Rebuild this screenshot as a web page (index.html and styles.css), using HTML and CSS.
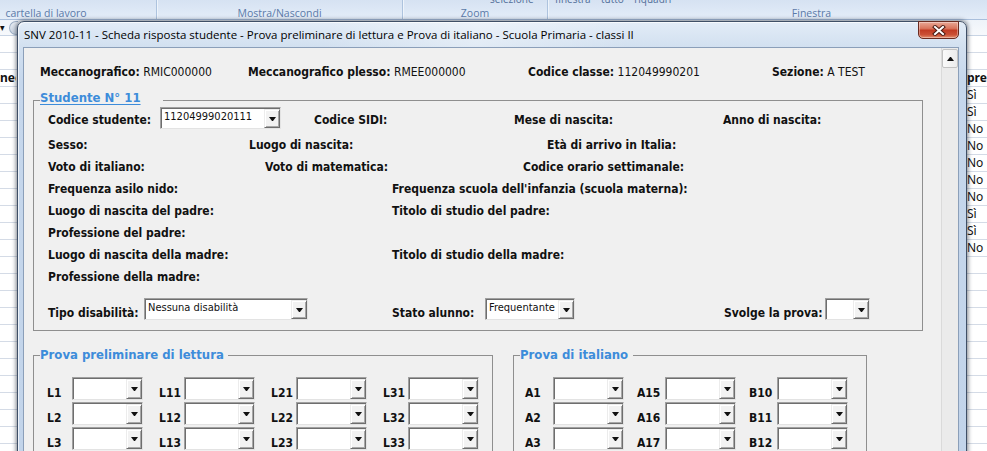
FILE: index.html
```html
<!DOCTYPE html>
<html lang="it">
<head>
<meta charset="utf-8">
<title>SNV 2010-11 - Scheda risposta studente</title>
<link rel="stylesheet" href="styles.css">
</head>
<body>
<div class="ribbon">
  <div class="grp g1"><div class="gtop"></div><div class="glbl">cartella di lavoro</div></div>
  <div class="grp g2"><div class="gtop"></div><div class="glbl">Mostra/Nascondi</div></div>
  <div class="grp g3"><div class="gtop"><span class="cut cut-sel">selezione</span></div><div class="glbl">Zoom</div></div>
  <div class="grp g4"><div class="gtop"><span class="cut cut-fin">finestra &nbsp; &nbsp;tutto &nbsp; &nbsp;riquadri</span></div><div class="glbl">Finestra</div></div>
</div>
<div class="bar"><span class="namebox">&#9662;</span><span class="fxbtn"></span></div>
<div class="sheet">
  <div class="srw"><span class="c-left"></span><span class="c-right"></span></div>
  <div class="srw"><span class="c-left"></span><span class="c-right"></span></div>
  <div class="srw"><span class="c-left hd">nec</span><span class="c-right hd">pres</span></div>
  <div class="srw"><span class="c-left"></span><span class="c-right">Sì</span></div>
  <div class="srw"><span class="c-left"></span><span class="c-right">Sì</span></div>
  <div class="srw"><span class="c-left"></span><span class="c-right">No</span></div>
  <div class="srw"><span class="c-left"></span><span class="c-right">No</span></div>
  <div class="srw"><span class="c-left"></span><span class="c-right">No</span></div>
  <div class="srw"><span class="c-left"></span><span class="c-right">No</span></div>
  <div class="srw"><span class="c-left"></span><span class="c-right">No</span></div>
  <div class="srw"><span class="c-left"></span><span class="c-right">Sì</span></div>
  <div class="srw"><span class="c-left"></span><span class="c-right">Sì</span></div>
  <div class="srw"><span class="c-left"></span><span class="c-right">No</span></div>
  <div class="srw"><span class="c-left"></span><span class="c-right"></span></div>
  <div class="srw"><span class="c-left"></span><span class="c-right"></span></div>
  <div class="srw"><span class="c-left"></span><span class="c-right"></span></div>
  <div class="srw"><span class="c-left"></span><span class="c-right"></span></div>
  <div class="srw"><span class="c-left"></span><span class="c-right"></span></div>
  <div class="srw"><span class="c-left"></span><span class="c-right"></span></div>
  <div class="srw"><span class="c-left"></span><span class="c-right"></span></div>
  <div class="srw"><span class="c-left"></span><span class="c-right"></span></div>
  <div class="srw"><span class="c-left"></span><span class="c-right"></span></div>
  <div class="srw"><span class="c-left"></span><span class="c-right"></span></div>
  <div class="srw"><span class="c-left"></span><span class="c-right"></span></div>
  <div class="srw"><span class="c-left"></span><span class="c-right"></span></div>
</div>

<div class="win">
  <div class="titlebar">
    <span class="title">SNV 2010-11 - Scheda risposta studente - Prova preliminare di lettura e Prova di italiano - Scuola Primaria - classi II</span>
    <button class="close" aria-label="Chiudi">
      <svg width="14" height="11" viewBox="0 0 14 11"><path d="M3 2 L11 9 M11 2 L3 9" stroke="#4a1b12" stroke-width="4" stroke-linecap="square"/><path d="M3 2 L11 9 M11 2 L3 9" stroke="#fff" stroke-width="2" stroke-linecap="square"/></svg>
    </button>
  </div>
  <div class="client">
    <div class="form">
      <div class="hdr">
        <span class="hi hw1"><b>Meccanografico:</b> RMIC000000</span>
        <span class="hi hw2"><b>Meccanografico plesso:</b> RMEE000000</span>
        <span class="hi hw3"><b>Codice classe:</b> 112049990201</span>
        <span class="hi"><b>Sezione:</b> A TEST</span>
      </div>

      <fieldset class="box student">
        <legend class="lg lg-stud">Studente N° 11</legend>
        <div class="srow ctl r1">
          <span class="lbl w112">Codice studente:</span>
          <span class="combo cw121"><span class="ctext">11204999020111</span><span class="cbtn"></span></span>
          <span class="lbl ml33 w200">Codice SIDI:</span>
          <span class="lbl w209">Mese di nascita:</span>
          <span class="lbl">Anno di nascita:</span>
        </div>
        <div class="srow r2">
          <span class="lbl w201">Sesso:</span>
          <span class="lbl w298">Luogo di nascita:</span>
          <span class="lbl">Età di arrivo in Italia:</span>
        </div>
        <div class="srow">
          <span class="lbl w217">Voto di italiano:</span>
          <span class="lbl w258">Voto di matematica:</span>
          <span class="lbl">Codice orario settimanale:</span>
        </div>
        <div class="srow">
          <span class="lbl w344">Frequenza asilo nido:</span>
          <span class="lbl">Frequenza scuola dell'infanzia (scuola materna):</span>
        </div>
        <div class="srow">
          <span class="lbl w344">Luogo di nascita del padre:</span>
          <span class="lbl">Titolo di studio del padre:</span>
        </div>
        <div class="srow">
          <span class="lbl">Professione del padre:</span>
        </div>
        <div class="srow">
          <span class="lbl w344">Luogo di nascita della madre:</span>
          <span class="lbl">Titolo di studio della madre:</span>
        </div>
        <div class="srow">
          <span class="lbl">Professione della madre:</span>
        </div>
        <div class="srow ctl r9">
          <span class="lbl w96">Tipo disabilità:</span>
          <span class="combo cw164"><span class="ctext">Nessuna disabilità</span><span class="cbtn"></span></span>
          <span class="lbl ml84 w93">Stato alunno:</span>
          <span class="combo cw90"><span class="ctext">Frequentante</span><span class="cbtn"></span></span>
          <span class="lbl ml149 w101">Svolge la prova:</span>
          <span class="combo cw45"><span class="ctext"></span><span class="cbtn"></span></span>
        </div>
      </fieldset>

      <div class="tests">
        <fieldset class="box lettura">
          <legend class="lg lg-let">Prova preliminare di lettura</legend>
          <div class="qgrid q4">
            <div class="q"><span class="ql">L1</span><span class="combo qc"><span class="ctext"></span><span class="cbtn"></span></span></div>
            <div class="q"><span class="ql">L11</span><span class="combo qc"><span class="ctext"></span><span class="cbtn"></span></span></div>
            <div class="q"><span class="ql">L21</span><span class="combo qc"><span class="ctext"></span><span class="cbtn"></span></span></div>
            <div class="q"><span class="ql">L31</span><span class="combo qc"><span class="ctext"></span><span class="cbtn"></span></span></div>
            <div class="q"><span class="ql">L2</span><span class="combo qc"><span class="ctext"></span><span class="cbtn"></span></span></div>
            <div class="q"><span class="ql">L12</span><span class="combo qc"><span class="ctext"></span><span class="cbtn"></span></span></div>
            <div class="q"><span class="ql">L22</span><span class="combo qc"><span class="ctext"></span><span class="cbtn"></span></span></div>
            <div class="q"><span class="ql">L32</span><span class="combo qc"><span class="ctext"></span><span class="cbtn"></span></span></div>
            <div class="q"><span class="ql">L3</span><span class="combo qc"><span class="ctext"></span><span class="cbtn"></span></span></div>
            <div class="q"><span class="ql">L13</span><span class="combo qc"><span class="ctext"></span><span class="cbtn"></span></span></div>
            <div class="q"><span class="ql">L23</span><span class="combo qc"><span class="ctext"></span><span class="cbtn"></span></span></div>
            <div class="q"><span class="ql">L33</span><span class="combo qc"><span class="ctext"></span><span class="cbtn"></span></span></div>
            <div class="q"><span class="ql">L4</span><span class="combo qc"><span class="ctext"></span><span class="cbtn"></span></span></div>
            <div class="q"><span class="ql">L14</span><span class="combo qc"><span class="ctext"></span><span class="cbtn"></span></span></div>
            <div class="q"><span class="ql">L24</span><span class="combo qc"><span class="ctext"></span><span class="cbtn"></span></span></div>
            <div class="q"><span class="ql">L34</span><span class="combo qc"><span class="ctext"></span><span class="cbtn"></span></span></div>
          </div>
        </fieldset>
        <fieldset class="box italiano">
          <legend class="lg lg-ita">Prova di italiano</legend>
          <div class="qgrid q3">
            <div class="q"><span class="ql">A1</span><span class="combo qc"><span class="ctext"></span><span class="cbtn"></span></span></div>
            <div class="q"><span class="ql">A15</span><span class="combo qc"><span class="ctext"></span><span class="cbtn"></span></span></div>
            <div class="q"><span class="ql">B10</span><span class="combo qc"><span class="ctext"></span><span class="cbtn"></span></span></div>
            <div class="q"><span class="ql">A2</span><span class="combo qc"><span class="ctext"></span><span class="cbtn"></span></span></div>
            <div class="q"><span class="ql">A16</span><span class="combo qc"><span class="ctext"></span><span class="cbtn"></span></span></div>
            <div class="q"><span class="ql">B11</span><span class="combo qc"><span class="ctext"></span><span class="cbtn"></span></span></div>
            <div class="q"><span class="ql">A3</span><span class="combo qc"><span class="ctext"></span><span class="cbtn"></span></span></div>
            <div class="q"><span class="ql">A17</span><span class="combo qc"><span class="ctext"></span><span class="cbtn"></span></span></div>
            <div class="q"><span class="ql">B12</span><span class="combo qc"><span class="ctext"></span><span class="cbtn"></span></span></div>
            <div class="q"><span class="ql">A4</span><span class="combo qc"><span class="ctext"></span><span class="cbtn"></span></span></div>
            <div class="q"><span class="ql">A18</span><span class="combo qc"><span class="ctext"></span><span class="cbtn"></span></span></div>
            <div class="q"><span class="ql">B13</span><span class="combo qc"><span class="ctext"></span><span class="cbtn"></span></span></div>
          </div>
        </fieldset>
      </div>
    </div>
    <div class="vscroll"><div class="vup"></div></div>
  </div>
</div>
</body>
</html>
```

FILE: styles.css
```css
* { box-sizing: border-box; }
html, body { margin: 0; padding: 0; }
body {
  width: 987px;
  height: 451px;
  overflow: hidden;
  position: relative;
  background: #fff;
  color: #111;
  font-family: "DejaVu Sans Condensed", "DejaVu Sans", sans-serif;
  font-stretch: semi-condensed;
}

/* ---------- Excel ribbon behind ---------- */
.ribbon {
  height: 20px;
  display: flex;
  overflow: hidden;
  background: linear-gradient(#d6e2f2, #dce7f5 45%, #e4edf8);
  border-bottom: 1px solid #a9bfdc;
  font-family: "Open Sans", sans-serif;
  font-stretch: normal;
}
.grp {
  flex: none;
  display: flex;
  flex-direction: column;
  border-right: 1px solid #adc3de;
  box-shadow: 1px 0 0 #eef4fb;
}
.g1 { margin-left: -64px; width: 221px; }
.g2 { width: 246px; }
.g3 { width: 145px; }
.g4 { width: 528px; }
.gtop { height: 8px; overflow: hidden; display: flex; }
.glbl {
  height: 11px;
  line-height: 11px;
  font-size: 10.5px;
  color: #5b7aa8;
  text-align: center;
  white-space: nowrap;
}
.cut {
  font-size: 10px;
  line-height: 10px;
  margin-top: -6px;
  color: #4f6d98;
  white-space: nowrap;
}
.cut-sel { margin-left: 87px; }
.cut-fin { margin-left: 7px; }

.bar {
  height: 16px;
  display: flex;
  align-items: center;
  gap: 4px;
  background: linear-gradient(#eef3f9, #f7f9fc);
  border-bottom: 1px solid #c8d4e4;
}
.namebox { font-size: 10px; line-height: 10px; color: #111; }
.fxbtn {
  width: 9px; height: 14px;
  border-radius: 7px 0 0 7px;
  background: linear-gradient(#e9eef5, #c9d3e0);
  border: 1px solid #9fb0c6;
  border-right: none;
}

.sheet {
  font-family: "Noto Sans", sans-serif;
  font-stretch: normal;
  font-size: 12px;
}
.srw {
  height: 17px;
  line-height: 16px;
  display: flex;
  justify-content: space-between;
  border-bottom: 1px solid #d4dbe6;
}
.c-left { width: 16px; overflow: hidden; white-space: nowrap; }
.c-right { width: 20px; overflow: hidden; white-space: nowrap; }
.hd { font-weight: bold; }

/* ---------- Dialog window ---------- */
.win {
  position: absolute;
  left: 17px;
  top: 21px;
  width: 950px;
  height: 440px;
  display: flex;
  flex-direction: column;
  padding: 0 7px 0 5px;
  border: 1px solid #3f4f66;
  border-radius: 7px 7px 0 0;
  background:
    linear-gradient(100deg, rgba(255,255,255,0) 30%, rgba(255,255,255,.35) 45%, rgba(255,255,255,0) 60%),
    linear-gradient(#e2ecf7, #d2e0f0 25px, #c6d7ec 60px, #c2d4ea);
  box-shadow: 0 0 4px 1px rgba(20,30,45,.55), inset 1px 1px 0 rgba(255,255,255,.7);
}
.titlebar {
  height: 25px;
  flex: none;
  display: flex;
  align-items: flex-start;
}
.title {
  flex: 1;
  padding-left: 1px;
  line-height: 26px;
  font-family: "Open Sans", sans-serif;
  font-stretch: normal;
  font-size: 11.5px;
  color: #000;
  white-space: nowrap;
  overflow: hidden;
}
.close {
  flex: none;
  width: 41px;
  height: 18px;
  margin-top: -1px;
  padding: 0;
  border: 1px solid #6a2b20;
  border-radius: 0 0 5px 5px;
  background: linear-gradient(#e9a896, #d9755d 40%, #c23c24 52%, #cb5136 80%, #e4906f);
  box-shadow: inset 0 0 0 1px rgba(255,255,255,.35);
  display: flex;
  align-items: center;
  justify-content: center;
}
.close svg { display: block; }

.client {
  flex: 1;
  display: flex;
  overflow: hidden;
  background: #f0f0f0;
  border: 1px solid #8b9fb9;
}
.form {
  flex: 1;
  min-width: 0;
  padding-top: 16px;
  overflow: hidden;
}
.vscroll {
  flex: none;
  width: 17px;
  background: #ebebeb;
  border-left: 1px solid #dadada;
}
.vup {
  height: 19px;
  margin-top: 1px;
  background: linear-gradient(to right, #fafafa, #ececec);
  border: 1px solid #c2c2c2;
  border-radius: 2px;
  display: flex;
  align-items: center;
  justify-content: center;
}
.vup::after {
  content: "";
  width: 1px;
  height: 0;
  border-left: 3px solid transparent;
  border-right: 3px solid transparent;
  border-bottom: 4px solid #111;
}

/* header row */
.hdr {
  display: flex;
  padding-left: 16px;
  line-height: 16px;
  font-size: 12px;
  white-space: nowrap;
}
.hw1 { width: 208px; }
.hw2 { width: 280px; }
.hw3 { width: 244px; }

/* group boxes */
.box {
  margin: 0;
  min-width: 0;
  border: 1px solid #8f8f8f;
  padding: 0 0 10px 6px;
}
.lg {
  padding: 0;
  font-size: 13px;
  line-height: 16px;
  font-weight: bold;
  color: #3d8cda;
  white-space: nowrap;
}
.lg-stud { padding: 0 22px 4px 0; text-decoration: underline; text-underline-offset: 2px; }
.lg-let { padding-right: 4px; }
.lg-ita { padding-right: 5px; }

.student {
  margin: 10px 0 0 9px;
  width: 890px;
}
.srow {
  display: flex;
  height: 22px;
  line-height: 22px;
  padding-left: 8px;
  font-size: 12px;
  white-space: nowrap;
}
.srow.ctl { align-items: flex-end; line-height: 16px; }
.r1 { margin-top: -3px; }
.r1 .lbl { margin-bottom: 1px; }
.r2 { margin-top: 5px; }
.r9 { margin-top: 10px; }
.r9 .lbl { margin-bottom: -1px; }
.lbl { flex: none; font-weight: bold; }
.w93 { width: 93px; }
.w96 { width: 96px; }
.w101 { width: 101px; }
.w112 { width: 112px; }
.w200 { width: 200px; }
.w201 { width: 201px; }
.w209 { width: 209px; }
.w217 { width: 217px; }
.w258 { width: 258px; }
.w298 { width: 298px; }
.w344 { width: 344px; }
.ml33 { margin-left: 33px; }
.ml84 { margin-left: 84px; }
.ml149 { margin-left: 149px; }

/* combo boxes */
.combo {
  flex: none;
  display: flex;
  height: 22px;
  background: #fff;
  border: 1px solid;
  border-color: #a0a0a0 #e3e3e3 #e3e3e3 #a0a0a0;
  box-shadow: inset 1px 1px 0 #6e6e6e;
}
.cw121 { width: 121px; }
.cw164 { width: 164px; }
.cw90 { width: 90px; }
.cw45 { width: 45px; }
.ctext {
  flex: 1;
  min-width: 0;
  padding: 2px 0 0 3px;
  font-size: 11px;
  line-height: 14px;
  font-weight: normal;
  white-space: nowrap;
  overflow: hidden;
  align-self: flex-start;
}
.cbtn {
  flex: none;
  width: 16px;
  margin-top: 1px;
  background: #f2f2f2;
  border: 1px solid;
  border-color: #ececec #6e6e6e #6e6e6e #ececec;
  box-shadow: inset 1px 1px 0 #fff, inset -1px -1px 0 #a8a8a8;
  display: flex;
  align-items: center;
  justify-content: center;
}
.cbtn::after {
  content: "";
  width: 1px;
  height: 0;
  border-left: 3px solid transparent;
  border-right: 3px solid transparent;
  border-top: 4px solid #111;
}

/* test grids */
.tests {
  display: flex;
  margin: 16px 0 0 9px;
}
.lettura { width: 460px; }
.italiano { width: 354px; margin-left: 20px; }
.qgrid {
  display: grid;
  row-gap: 2px;
  padding-top: 14px;
}
.q4 { grid-template-columns: repeat(4, 96px); column-gap: 16px; margin-left: 7px; }
.q3 { grid-template-columns: repeat(3, 99px); column-gap: 13px; margin-left: 5px; }
.q { display: flex; align-items: flex-end; }
.ql {
  flex: none;
  width: 25px;
  font-size: 12px;
  line-height: 16px;
  font-weight: bold;
  margin-bottom: -1px;
}
.q3 .ql { width: 28px; }
.qc { width: 71px; height: 23px; }
```
